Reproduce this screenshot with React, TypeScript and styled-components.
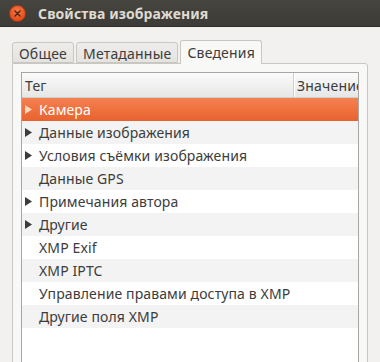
import React from "react";
import styled, { createGlobalStyle } from "styled-components";

const Global = createGlobalStyle`
  html, body { margin: 0; padding: 0; background: #f2f1f0; }
  body { font-family: "Noto Sans", "DejaVu Sans", sans-serif; }
  * { box-sizing: border-box; }
`;

const Window = styled.div`
  width: 380px;
  height: 362px;
  overflow: hidden;
  display: flex;
  flex-direction: column;
  background: #f2f1f0;
`;

const TitleBar = styled.div`
  height: 27px;
  flex: none;
  display: flex;
  align-items: center;
  padding-left: 9px;
  gap: 12px;
  background: linear-gradient(#46453f, #3c3b37);
  border-bottom: 1px solid #2f2e2b;
`;

const CloseButton = styled.div`
  width: 17px;
  height: 17px;
  border-radius: 50%;
  background: radial-gradient(circle at 50% 35%, #f7794a, #e5501a 70%);
  border: 1px solid #a83a12;
  display: flex;
  align-items: center;
  justify-content: center;
`;

const Title = styled.div`
  color: #dfdbd2;
  font-weight: bold;
  font-size: 14px;
  letter-spacing: 0.1px;
`;

const Content = styled.div`
  flex: none;
  height: 360px;
  padding: 13px 12px 0 12px;
  display: flex;
  flex-direction: column;
`;

const TabStrip = styled.div`
  display: flex;
  align-items: flex-end;
  gap: 2px;
  height: 23px;
  position: relative;
  z-index: 1;
`;

const Tab = styled.div<{ $active?: boolean }>`
  height: ${(p) => (p.$active ? "24px" : "21px")};
  margin-bottom: ${(p) => (p.$active ? "-1px" : "0")};
  padding: 0 6px 0 6px;
  display: flex;
  align-items: center;
  font-size: 14px;
  letter-spacing: 0.2px;
  color: #3c3c3c;
  border: 1px solid #c9c7c2;
  border-bottom: ${(p) => (p.$active ? "none" : "1px solid #c9c7c2")};
  border-radius: 3px 3px 0 0;
  background: ${(p) => (p.$active ? "#f8f8f7" : "linear-gradient(#eeedeb, #e4e3e0)")};
  padding-top: ${(p) => (p.$active ? "0" : "1px")};
`;

const Panel = styled.div`
  flex: 1;
  border: 1px solid #c9c7c2;
  border-radius: 0 3px 0 0;
  background: #f8f8f7;
  padding: 8px 8px 0 8px;
  display: flex;
  flex-direction: column;
`;

const Tree = styled.div`
  flex: 1;
  border: 1px solid #a8a6a2;
  background: #ffffff;
  overflow: hidden;
`;

const Header = styled.div`
  height: 25px;
  display: grid;
  grid-template-columns: 271px 1fr;
  background: linear-gradient(#fbfbfb, #e6e6e5);
  border-bottom: 1px solid #cfcfcd;
  overflow: hidden;
`;

const HeaderCell = styled.div<{ $sep?: boolean }>`
  display: flex;
  align-items: center;
  padding-left: 3px;
  font-size: 14px;
  letter-spacing: 0.2px;
  color: #3c3c3c;
  white-space: nowrap;
  overflow: hidden;
  border-left: ${(p) => (p.$sep ? "1px solid #cfcfcd" : "none")};
  box-shadow: ${(p) => (p.$sep ? "inset 1px 0 0 #ffffff" : "none")};
`;

const Row = styled.div<{ $selected?: boolean; $alt?: boolean }>`
  height: 23px;
  display: flex;
  align-items: center;
  padding-left: 2px;
  font-size: 14px;
  letter-spacing: 0.12px;
  white-space: nowrap;
  color: ${(p) => (p.$selected ? "#ffffff" : "#3c3c3c")};
  background: ${(p) =>
    p.$selected
      ? "linear-gradient(#f58150, #e8622e)"
      : p.$alt
      ? "#f3f3f3"
      : "#ffffff"};
`;

const Expander = styled.div`
  width: 15px;
  flex: none;
  display: flex;
  align-items: center;
  justify-content: flex-start;
  padding-left: 1px;
`;

const Label = styled.span``;

const Arrow: React.FC<{ color: string }> = ({ color }) => (
  <svg width="7" height="9" viewBox="0 0 7 9">
    <path d="M0 0 L7 4.5 L0 9 Z" fill={color} />
  </svg>
);

const rows: { label: string; expandable: boolean }[] = [
  { label: "Камера", expandable: true },
  { label: "Данные изображения", expandable: true },
  { label: "Условия съёмки изображения", expandable: true },
  { label: "Данные GPS", expandable: false },
  { label: "Примечания автора", expandable: true },
  { label: "Другие", expandable: true },
  { label: "XMP Exif", expandable: false },
  { label: "XMP IPTC", expandable: false },
  { label: "Управление правами доступа в XMP", expandable: false },
  { label: "Другие поля XMP", expandable: false },
];

export default function App() {
  return (
    <>
      <Global />
      <Window>
        <TitleBar>
          <CloseButton>
            <svg width="7" height="7" viewBox="0 0 7 7">
              <path d="M1 1 L6 6 M6 1 L1 6" stroke="#4a2212" strokeWidth="1.4" strokeLinecap="round" />
            </svg>
          </CloseButton>
          <Title>Свойства изображения</Title>
        </TitleBar>
        <Content>
          <TabStrip>
            <Tab>Общее</Tab>
            <Tab>Метаданные</Tab>
            <Tab $active>Сведения</Tab>
          </TabStrip>
          <Panel>
            <Tree>
              <Header>
                <HeaderCell>Тег</HeaderCell>
                <HeaderCell $sep>Значение</HeaderCell>
              </Header>
              {rows.map((r, i) => (
                <Row key={r.label} $selected={i === 0} $alt={i % 2 === 1}>
                  <Expander>
                    {r.expandable && <Arrow color={i === 0 ? "#fcd7c4" : "#3c3c3c"} />}
                  </Expander>
                  <Label>{r.label}</Label>
                </Row>
              ))}
            </Tree>
          </Panel>
        </Content>
      </Window>
    </>
  );
}
